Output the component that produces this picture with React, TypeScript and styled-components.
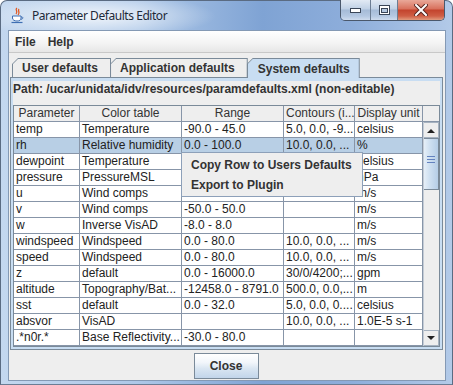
import styled, { createGlobalStyle } from 'styled-components';

const GlobalStyle = createGlobalStyle`
  html, body {
    margin: 0;
    padding: 0;
    background: #ffffff;
  }
  body {
    font-family: "Liberation Sans", Arial, sans-serif;
    font-size: 12px;
    color: #333333;
  }
`;

const GRID = '#8795a8';
const LINE = '#7a8a99';

const Window = styled.div`
  width: 453px;
  height: 385px;
  box-sizing: border-box;
  display: flex;
  flex-direction: column;
  padding: 0 6px 5px 7px;
  border: 1px solid #5a6b82;
  border-bottom-color: #6b7d94;
  border-radius: 7px 7px 0 0;
  background:
    radial-gradient(ellipse 120px 22px at 95px 15px, rgba(255, 255, 255, 0.8), rgba(255, 255, 255, 0) 100%),
    linear-gradient(to right, #c3d7ef 0%, #aec8e8 30%, #7fa3d4 58%, #8eaedb 78%, #b3cae8 100%);
`;

const TitleBar = styled.div`
  height: 29px;
  display: flex;
  align-items: flex-start;
  flex-shrink: 0;
`;

const AppIcon = styled.svg`
  margin: 6px 0 0 2px;
  flex-shrink: 0;
`;

const Title = styled.span`
  margin-left: 7px;
  line-height: 29px;
  font-family: "Noto Sans", "Open Sans", sans-serif;
  font-size: 12px;
  letter-spacing: -0.45px;
  color: #1e2a3a;
`;

const Controls = styled.div`
  margin: -1px 1px 0 auto;
  display: flex;
  height: 20px;
  border: 1px solid #4a586c;
  border-top: none;
  border-radius: 0 0 5px 5px;
  overflow: hidden;
`;

const ControlButton = styled.div<{ $w: number; $danger?: boolean }>`
  width: ${(p) => p.$w}px;
  display: flex;
  align-items: center;
  justify-content: center;
  background: ${(p) =>
    p.$danger
      ? 'linear-gradient(#e9a899 0%, #d8705c 45%, #c3432d 50%, #cf5e45 80%, #e19a7d 100%)'
      : 'linear-gradient(#e2eaf4 0%, #c0d1e6 45%, #a5bbd7 50%, #b4c8e2 80%, #cfdcee 100%)'};
  & + & {
    border-left: 1px solid #6c7d93;
  }
`;

const Client = styled.div`
  flex: 1;
  display: flex;
  flex-direction: column;
  background: #eeeeee;
  border: 1px solid #8499b4;
`;

const MenuBar = styled.div`
  height: 21px;
  display: flex;
  align-items: center;
  gap: 12px;
  padding-left: 6px;
  background: linear-gradient(#ffffff, #f3f3f3 60%, #e6e6e6);
  border-bottom: 1px solid #c8c8c8;
  flex-shrink: 0;
`;

const MenuItem = styled.span`
  font-weight: bold;
  color: #333333;
`;

const TabArea = styled.div`
  padding: 5px 2px 0 1px;
  display: flex;
  flex-direction: column;
`;

const TabStrip = styled.div`
  height: 19px;
  display: flex;
  align-items: flex-start;
  padding-left: 3px;
`;

const TabOuter = styled.div<{ $active?: boolean }>`
  position: relative;
  z-index: ${(p) => (p.$active ? 2 : 1)};
  height: ${(p) => (p.$active ? 20 : 19)}px;
  margin-left: -1px;
  padding: 1px 1px 0 1px;
  box-sizing: border-box;
  background: ${LINE};
  clip-path: polygon(0 6px, 6px 0, 100% 0, 100% 100%, 0 100%);
`;

const TabInner = styled.div<{ $active?: boolean }>`
  height: 100%;
  display: flex;
  align-items: center;
  padding: 0 ${(p) => (p.$active ? 9 : 12)}px 0 ${(p) => (p.$active ? 10 : 9)}px;
  background: ${(p) => (p.$active ? '#c8ddf2' : '#eeeeee')};
  clip-path: polygon(0 5px, 5px 0, 100% 0, 100% 100%, 0 100%);
  font-weight: bold;
  color: #333333;
  white-space: nowrap;
`;

const TabPanel = styled.div`
  border: 1px solid ${LINE};
`;

const TabContent = styled.div`
  border: 2px solid #c8ddf2;
  border-top-width: 3px;
  display: flex;
  flex-direction: column;
`;

const PathLabel = styled.div`
  font-weight: bold;
  line-height: 16px;
  margin-bottom: 8px;
  color: #333333;
  white-space: nowrap;
`;

const ScrollPane = styled.div`
  position: relative;
  display: flex;
  border: 1px solid ${LINE};
  background: #ffffff;
`;

const Table = styled.table`
  width: 409px;
  table-layout: fixed;
  border-collapse: separate;
  border-spacing: 0;
  font-size: 12px;
`;

const HeaderCell = styled.th`
  height: 15px;
  padding: 0 2px;
  font-weight: normal;
  text-align: center;
  color: #333333;
  background: #eeeeee;
  border-right: 1px solid ${GRID};
  border-bottom: 1px solid ${GRID};
  white-space: nowrap;
  overflow: hidden;
  line-height: 15px;
`;

const Cell = styled.td<{ $selected?: boolean }>`
  height: 15px;
  padding: 0 0 0 2px;
  line-height: 15px;
  color: #222222;
  background: ${(p) => (p.$selected ? '#b8cfe5' : '#ffffff')};
  border-right: 1px solid ${GRID};
  border-bottom: 1px solid ${GRID};
  white-space: nowrap;
  overflow: hidden;
`;

const SideColumn = styled.div`
  width: 16px;
  display: flex;
  flex-direction: column;
  background: #eeeeee;
`;

const Corner = styled.div`
  height: 15px;
  border-bottom: 1px solid ${GRID};
  background: #eeeeee;
`;

const ScrollBar = styled.div`
  flex: 1;
  display: flex;
  flex-direction: column;
  background: #eeeeee;
  border-left: 1px solid #c4ccd6;
`;

const ArrowButton = styled.div`
  height: 16px;
  box-sizing: border-box;
  display: flex;
  align-items: center;
  justify-content: center;
  background: #eeeeee;
  border: 1px solid #a6b2c0;
  border-left: none;
`;

const Track = styled.div`
  flex: 1;
  display: flex;
  flex-direction: column;
`;

const Thumb = styled.div`
  height: 52px;
  box-sizing: border-box;
  border: 1px solid ${LINE};
  border-left: none;
  background: linear-gradient(to right, #e6eff8 0%, #cfe0f1 40%, #b5cde6 100%);
  display: flex;
  flex-direction: column;
  align-items: center;
  padding-top: 17px;
  gap: 2px;
`;

const GripLine = styled.div`
  width: 8px;
  height: 1px;
  background: #6382bf;
`;

const PopupMenu = styled.div`
  position: absolute;
  left: 167px;
  top: 46px;
  width: 182px;
  box-sizing: border-box;
  padding: 2px 0 1px;
  background: #eeeeee;
  border: 1px solid #8da0b9;
  z-index: 5;
`;

const PopupItem = styled.div`
  line-height: 20px;
  padding-left: 9px;
  font-weight: bold;
  color: #333333;
  white-space: nowrap;
`;

const ButtonRow = styled.div`
  display: flex;
  justify-content: center;
  padding: 3px 0 1px;
`;

const Button = styled.button`
  width: 65px;
  height: 26px;
  margin-left: -2px;
  border: 1px solid ${LINE};
  border-radius: 0;
  background: linear-gradient(#ffffff 0%, #f2f6fb 35%, #dae6f2 60%, #c2d5ea 100%);
  font-family: "Liberation Sans", Arial, sans-serif;
  font-size: 12px;
  font-weight: bold;
  color: #333333;
  padding: 0;
`;

const columns = [66, 102, 102, 71, 68];
const headers = ['Parameter', 'Color table', 'Range', 'Contours (i...', 'Display unit'];

// cells hidden under the popup menu are left blank
const rows: string[][] = [
  ['temp', 'Temperature', '-90.0 - 45.0', '5.0, 0.0, -9...', 'celsius'],
  ['rh', 'Relative humidity', '0.0 - 100.0', '10.0, 0.0, ...', '%'],
  ['dewpoint', 'Temperature', '', '', 'celsius'],
  ['pressure', 'PressureMSL', '', '', 'hPa'],
  ['u', 'Wind comps', '', '', 'm/s'],
  ['v', 'Wind comps', '-50.0 - 50.0', '', 'm/s'],
  ['w', 'Inverse VisAD', '-8.0 - 8.0', '', 'm/s'],
  ['windspeed', 'Windspeed', '0.0 - 80.0', '10.0, 0.0, ...', 'm/s'],
  ['speed', 'Windspeed', '0.0 - 80.0', '10.0, 0.0, ...', 'm/s'],
  ['z', 'default', '0.0 - 16000.0', '30/0/4200;...', 'gpm'],
  ['altitude', 'Topography/Bat...', '-12458.0 - 8791.0', '500.0, 0.0,...', 'm'],
  ['sst', 'default', '0.0 - 32.0', '5.0, 0.0, 0....', 'celsius'],
  ['absvor', 'VisAD', '', '10.0, 0.0, ...', '1.0E-5 s-1'],
  ['.*n0r.*', 'Base Reflectivity...', '-30.0 - 80.0', '', ''],
];

function JavaIcon() {
  return (
    <AppIcon width="15" height="17" viewBox="0 0 15 17">
      <path d="M7 1 C4 3 9 4 6 7 M9 2 C7 4 11 5 8 8" stroke="#e2571e" strokeWidth="1.3" fill="none" />
      <path d="M2.5 9 H11 V11 C11 13 9.5 14 7 14 C4.5 14 2.5 13 2.5 11 Z" fill="#ffffff" stroke="#3f6fb3" strokeWidth="1" />
      <path d="M11 10 C13.5 9.5 13.5 12 11 12.3" stroke="#3f6fb3" strokeWidth="1" fill="none" />
      <path d="M1.5 15.5 H12.5" stroke="#3f6fb3" strokeWidth="1.2" />
    </AppIcon>
  );
}

function Triangle({ up }: { up?: boolean }) {
  return (
    <svg width="8" height="5" viewBox="0 0 8 5">
      <path d={up ? 'M0 5 L4 1 L8 5 Z' : 'M0 0 L8 0 L4 4 Z'} fill="#222222" />
    </svg>
  );
}

export default function App() {
  return (
    <>
      <GlobalStyle />
      <Window>
        <TitleBar>
          <JavaIcon />
          <Title>Parameter Defaults Editor</Title>
          <Controls>
            <ControlButton $w={29}>
              <svg width="11" height="6" viewBox="0 0 11 6">
                <rect x="0.5" y="1.5" width="10" height="4" fill="#ffffff" stroke="#3a4658" />
              </svg>
            </ControlButton>
            <ControlButton $w={26}>
              <svg width="11" height="10" viewBox="0 0 11 10">
                <rect x="0.5" y="0.5" width="10" height="9" fill="#ffffff" stroke="#3a4658" />
                <rect x="2.5" y="3.5" width="6" height="4" fill="#b4c7df" stroke="#3a4658" />
              </svg>
            </ControlButton>
            <ControlButton $w={46} $danger>
              <svg width="14" height="12" viewBox="0 0 14 12">
                <path d="M2 1 L12 11 M12 1 L2 11" stroke="#5a2620" strokeWidth="4" strokeLinecap="square" />
                <path d="M2 1 L12 11 M12 1 L2 11" stroke="#ffffff" strokeWidth="2" strokeLinecap="square" />
              </svg>
            </ControlButton>
          </Controls>
        </TitleBar>
        <Client>
          <MenuBar>
            <MenuItem>File</MenuItem>
            <MenuItem>Help</MenuItem>
          </MenuBar>
          <TabArea>
            <TabStrip>
              <TabOuter>
                <TabInner>User defaults</TabInner>
              </TabOuter>
              <TabOuter>
                <TabInner>Application defaults</TabInner>
              </TabOuter>
              <TabOuter $active>
                <TabInner $active>System defaults</TabInner>
              </TabOuter>
            </TabStrip>
            <TabPanel>
              <TabContent>
                <PathLabel>Path: /ucar/unidata/idv/resources/paramdefaults.xml (non-editable)</PathLabel>
                <ScrollPane>
                  <Table>
                    <colgroup>
                      {columns.map((w, i) => (
                        <col key={i} style={{ width: w }} />
                      ))}
                    </colgroup>
                    <thead>
                      <tr>
                        {headers.map((h) => (
                          <HeaderCell key={h}>{h}</HeaderCell>
                        ))}
                      </tr>
                    </thead>
                    <tbody>
                      {rows.map((r, i) => (
                        <tr key={i}>
                          {r.map((c, j) => (
                            <Cell key={j} $selected={i === 1}>
                              {c}
                            </Cell>
                          ))}
                        </tr>
                      ))}
                    </tbody>
                  </Table>
                  <SideColumn>
                    <Corner />
                    <ScrollBar>
                      <ArrowButton>
                        <Triangle up />
                      </ArrowButton>
                      <Track>
                        <Thumb>
                          <GripLine />
                          <GripLine />
                          <GripLine />
                        </Thumb>
                      </Track>
                      <ArrowButton>
                        <Triangle />
                      </ArrowButton>
                    </ScrollBar>
                  </SideColumn>
                  <PopupMenu>
                    <PopupItem>Copy Row to Users Defaults</PopupItem>
                    <PopupItem>Export to Plugin</PopupItem>
                  </PopupMenu>
                </ScrollPane>
              </TabContent>
            </TabPanel>
          </TabArea>
          <ButtonRow>
            <Button>Close</Button>
          </ButtonRow>
        </Client>
      </Window>
    </>
  );
}
